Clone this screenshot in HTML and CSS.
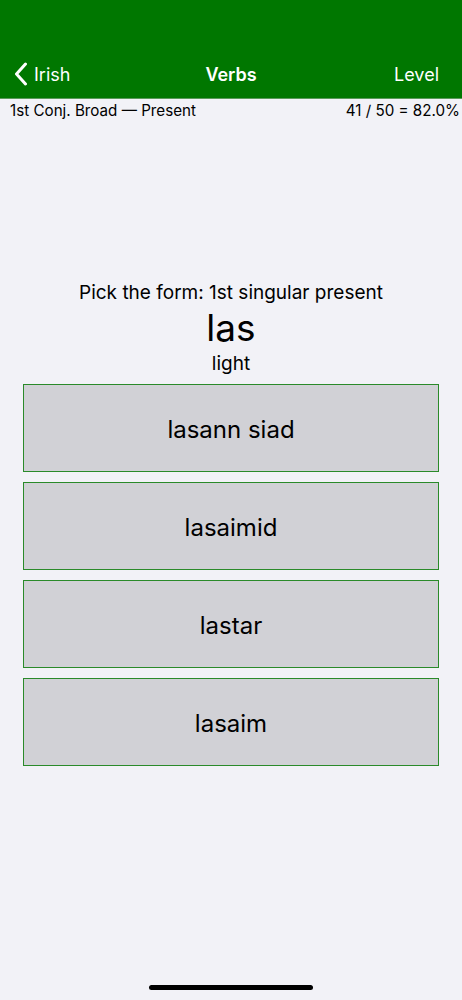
FILE: index.html
```html
<!DOCTYPE html>
<html>
<head>
<meta charset="utf-8">
<link rel="stylesheet" href="styles.css">
</head>
<body>
<div class="screen">
  <header class="nav">
    <div class="status"></div>
    <div class="bar">
      <div class="back">
        <svg class="chev" width="14" height="24" viewBox="0 0 14 24"><path d="M11.5 2 L2.5 12 L11.5 22" fill="none" stroke="#fff" stroke-width="3" stroke-linecap="round" stroke-linejoin="round"/></svg>
        <span>Irish</span>
      </div>
      <div class="title">Verbs</div>
      <div class="right">Level</div>
    </div>
  </header>
  <div class="sub">
    <span>1st Conj. Broad — Present</span>
    <span>41 / 50 = 82.0%</span>
  </div>
  <main class="quiz">
    <div class="prompt">Pick the form: 1st singular present</div>
    <div class="word">las</div>
    <div class="gloss">light</div>
    <div class="choices">
      <div class="choice">lasann siad</div>
      <div class="choice">lasaimid</div>
      <div class="choice">lastar</div>
      <div class="choice">lasaim</div>
    </div>
  </main>
  <div class="home"></div>
</div>
</body>
</html>
```
FILE: styles.css
```css
html, body {
  margin: 0;
  padding: 0;
}
body {
  font-family: Inter, "Liberation Sans", sans-serif;
  background: #f2f2f7;
  color: #000;
}
.screen {
  width: 462px;
  height: 1000px;
  display: flex;
  flex-direction: column;
  position: relative;
  overflow: hidden;
}
.nav {
  background: #007700;
  color: #fff;
  height: 98px;
  display: flex;
  flex-direction: column;
  border-bottom: 1px solid #5a9a5a;
}
.status {
  height: 50px;
}
.bar {
  height: 48px;
  display: flex;
  align-items: center;
  justify-content: space-between;
  padding: 0 23px 0 14px;
  position: relative;
  font-size: 18px;
}
.back {
  display: flex;
  align-items: center;
  gap: 6px;
}
.chev {
  display: block;
}
.title {
  position: absolute;
  left: 0;
  right: 0;
  text-align: center;
  font-weight: 600;
  pointer-events: none;
}
.right {
  font-size: 18px;
}
.sub {
  display: flex;
  justify-content: space-between;
  padding: 2px 2px 0 10px;
  font-size: 15.2px;
  height: 20px;
  line-height: 20px;
}
.quiz {
  display: flex;
  flex-direction: column;
  align-items: center;
  padding-top: 161px;
}
.prompt {
  font-size: 19px;
  line-height: 22px;
}
.word {
  font-size: 37px;
  line-height: 44px;
  margin-top: 2px;
}
.gloss {
  font-size: 19px;
  line-height: 24px;
  margin-top: 2px;
}
.choices {
  margin-top: 8px;
  display: flex;
  flex-direction: column;
  gap: 10px;
  width: 416px;
}
.choice {
  height: 86px;
  border: 1px solid #2a8a2a;
  background: #d1d1d6;
  display: flex;
  align-items: center;
  justify-content: center;
  font-size: 24px;
  padding-top: 2px;
  box-sizing: border-box;
  height: 88px;
}
.home {
  position: absolute;
  left: 149px;
  top: 985px;
  width: 164px;
  height: 5px;
  border-radius: 3px;
  background: #000;
}
```
